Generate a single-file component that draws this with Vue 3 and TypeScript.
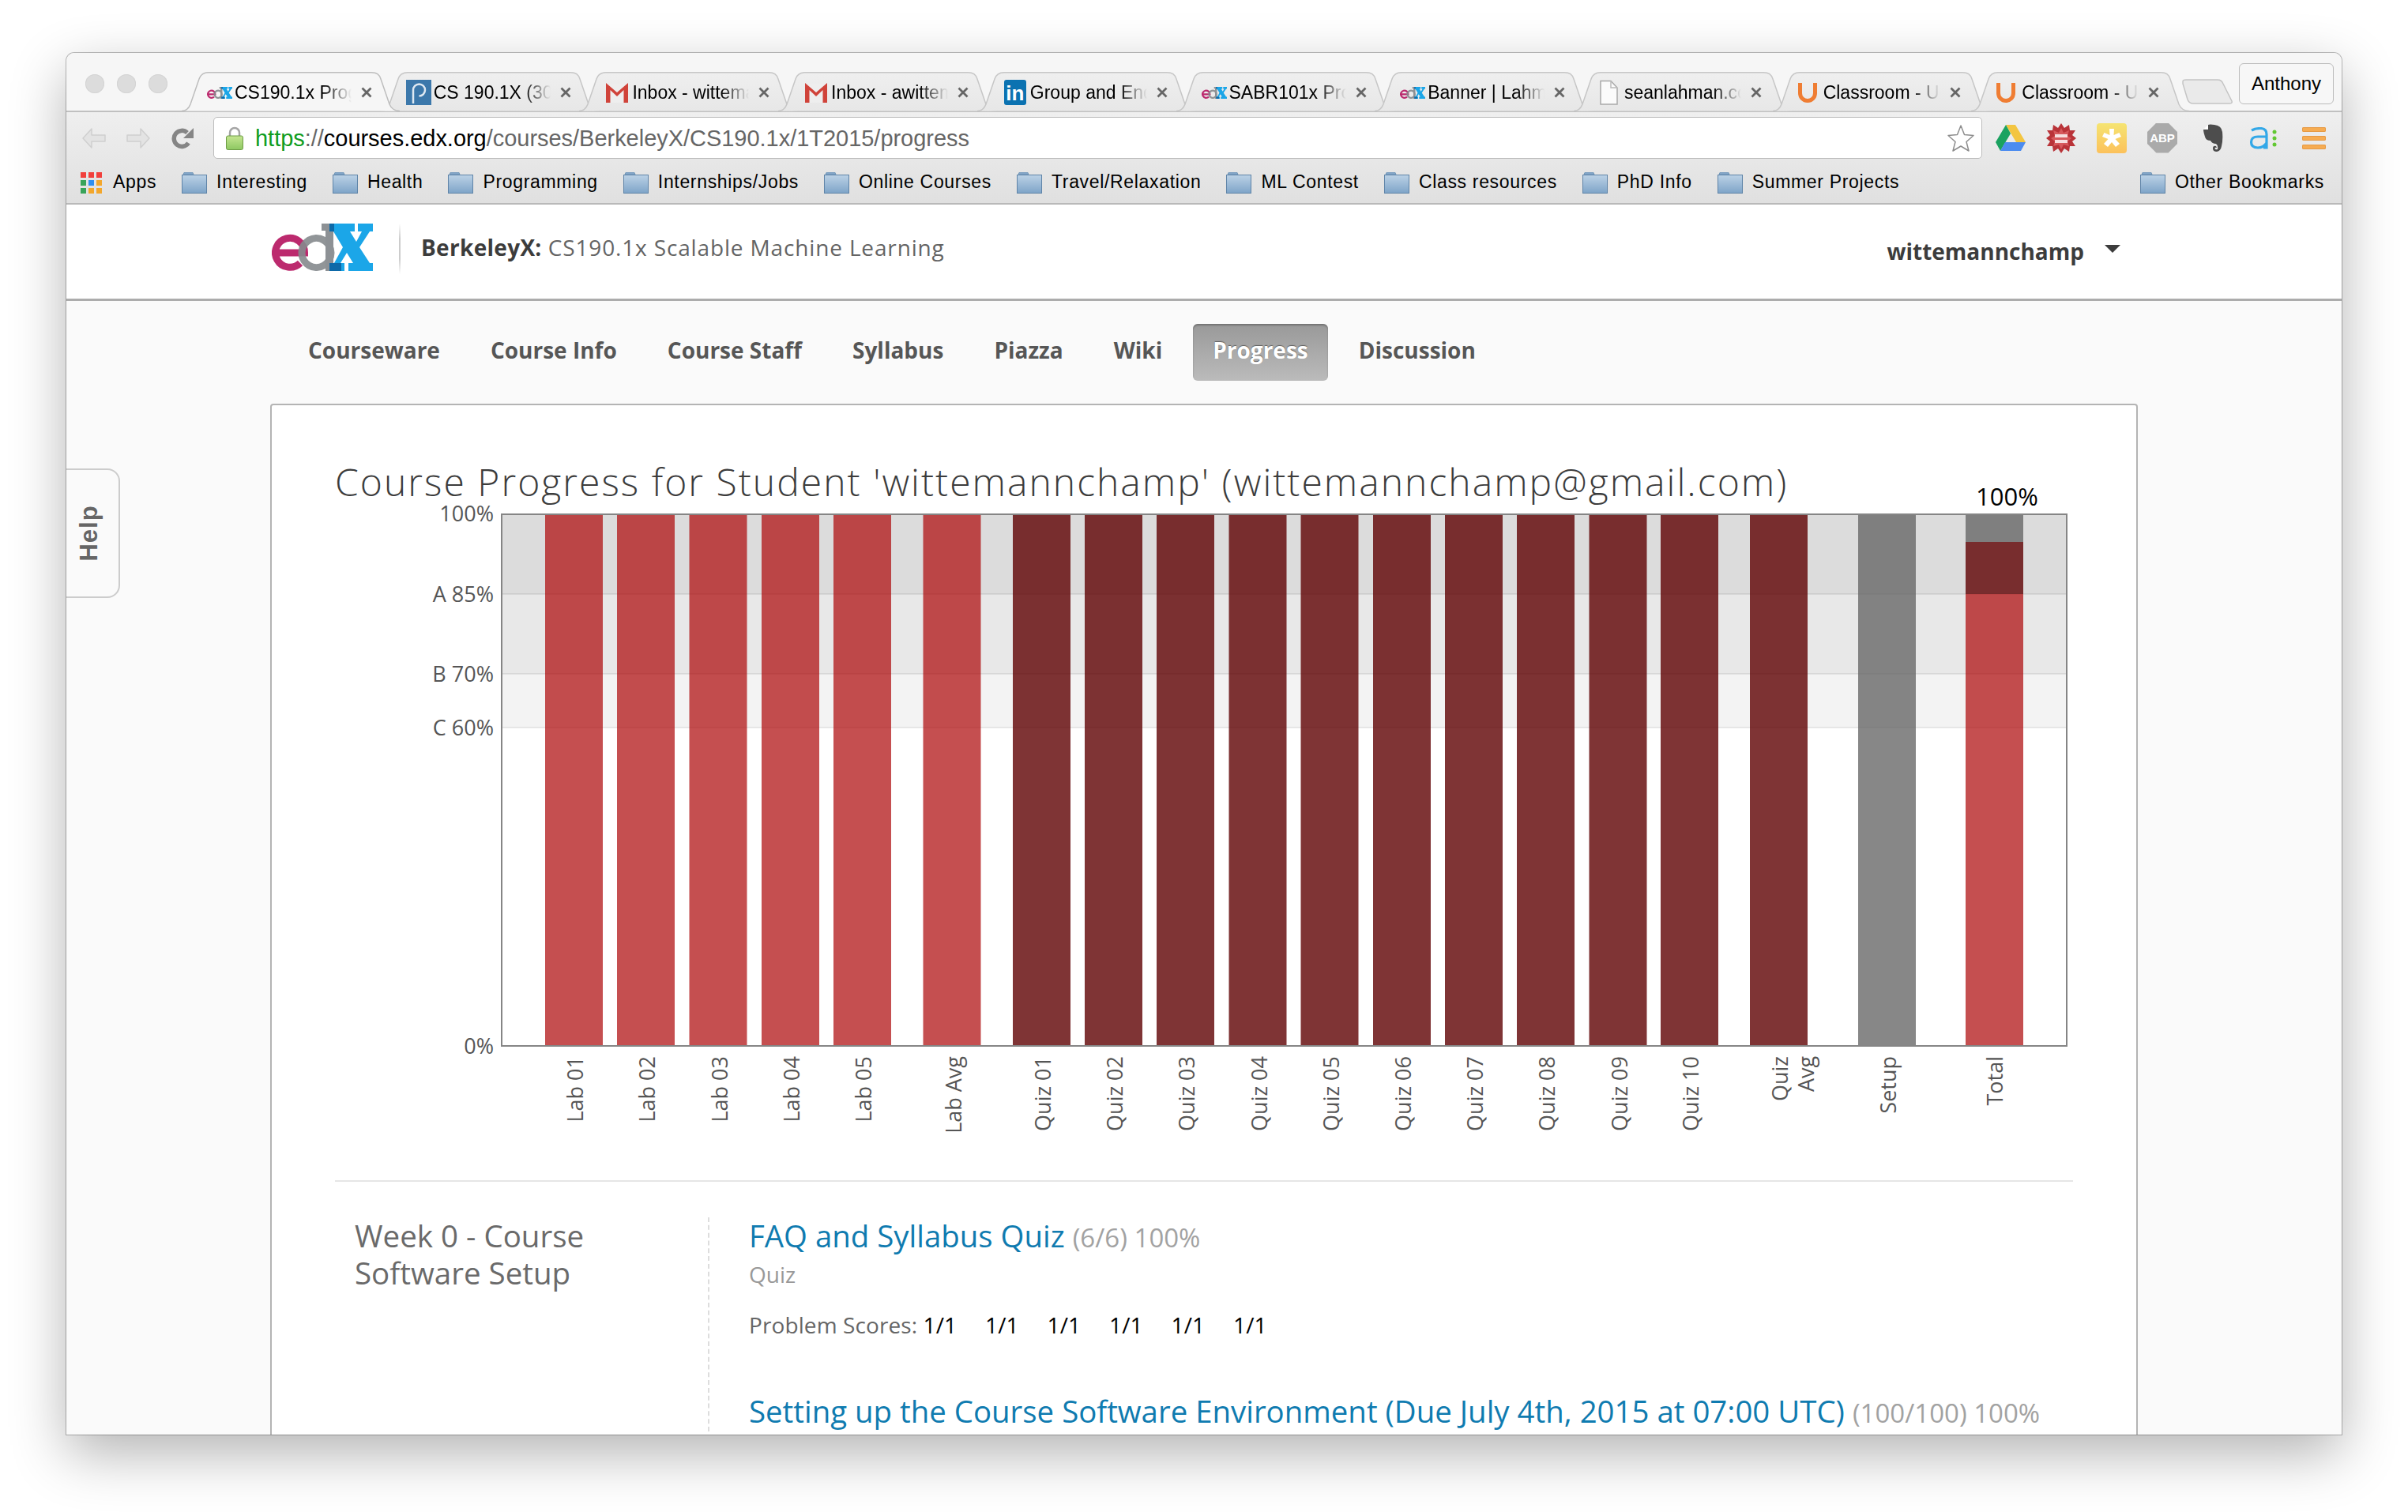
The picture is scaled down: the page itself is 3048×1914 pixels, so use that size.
<script setup lang="ts">
interface Tab { title: string; icon: string }
interface Bar { x: number; kind: 'lab' | 'quiz' | 'setup' }
interface XLabel { x: number; text: string }

const tabs: Tab[] = [
  { title: 'CS190.1x Progress', icon: 'edx' },
  { title: 'CS 190.1X (30 unread)', icon: 'piazza' },
  { title: 'Inbox - wittemannchamp', icon: 'gmail' },
  { title: 'Inbox - awittemann', icon: 'gmail' },
  { title: 'Group and Endorsements', icon: 'in' },
  { title: 'SABR101x Progress', icon: 'edx' },
  { title: 'Banner | Lahman', icon: 'edx' },
  { title: 'seanlahman.com', icon: 'doc' },
  { title: 'Classroom - Udacity', icon: 'u' },
  { title: 'Classroom - Udacity', icon: 'u' },
]
const folders: string[] = ['Interesting', 'Health', 'Programming', 'Internships/Jobs', 'Online Courses', 'Travel/Relaxation', 'ML Contest', 'Class resources', 'PhD Info', 'Summer Projects']
const navItems: string[] = ['Courseware', 'Course Info', 'Course Staff', 'Syllabus', 'Piazza', 'Wiki', 'Progress', 'Discussion']

const PLOT_LEFT = 634
const barXs: Array<[number, Bar['kind'], string]> = [
  [690, 'lab', 'Lab 01'], [781, 'lab', 'Lab 02'], [872.5, 'lab', 'Lab 03'], [964, 'lab', 'Lab 04'], [1055, 'lab', 'Lab 05'],
  [1168.5, 'lab', 'Lab Avg'],
  [1282, 'quiz', 'Quiz 01'], [1373, 'quiz', 'Quiz 02'], [1464, 'quiz', 'Quiz 03'], [1555.5, 'quiz', 'Quiz 04'], [1646.5, 'quiz', 'Quiz 05'],
  [1738, 'quiz', 'Quiz 06'], [1829, 'quiz', 'Quiz 07'], [1920, 'quiz', 'Quiz 08'], [2011.5, 'quiz', 'Quiz 09'], [2102, 'quiz', 'Quiz 10'],
  [2215, 'quiz', 'Quiz Avg'], [2352, 'setup', 'Setup'],
]
const bars: Bar[] = barXs.map(([x, kind]) => ({ x: x - PLOT_LEFT, kind }))
const xLabels: XLabel[] = [
  ...barXs.filter(b => b[2] !== 'Quiz Avg').map(([x, , text]) => ({ x: x - PLOT_LEFT + 37, text })),
  { x: 2269 - PLOT_LEFT, text: 'Quiz\nAvg' },
  { x: 2524 - PLOT_LEFT, text: 'Total' },
]
const yTicks: Array<{ y: number; text: string }> = [
  { y: 0, text: '100%' }, { y: 102, text: 'A 85%' }, { y: 203, text: 'B 70%' }, { y: 271, text: 'C 60%' }, { y: 674, text: '0%' },
]
const scores: string[] = ['1/1', '1/1', '1/1', '1/1', '1/1', '1/1']
</script>

<template>
  <div class="stage">
    <svg class="defs" width="0" height="0" aria-hidden="true">
      <symbol id="edx-logo" viewBox="0 0 128 60">
        <path d="M4.5 37H41.5A18.5 18.5 0 1 0 36 50" fill="none" stroke="#b81f66" stroke-width="9" opacity=".95" />
        <path d="M75 37A18.5 18.5 0 1 0 75 37.01" fill="none" stroke="#85898d" stroke-width="9" opacity=".9" />
        <path d="M63 0H78V60H68V9H63Z" fill="#8d9195" />
        <path d="M74 0H105V10H99L107 23L114 10H109V0H128V10H124L111 30L124 50H128V60H97V50H103L95 37L87 50H92V60H74V50H79L90 30L78 10H74Z" fill="#1ba6e8" />
        <path d="M73 0H79V10H73ZM73 50H88V60H73Z" fill="#0d69a8" />
      </symbol>
      <symbol id="folder" viewBox="0 0 32 27">
        <path d="M2 3Q2 0 5 0H12Q15 0 15 3H2Z" fill="#83a6c8" stroke="#6f93b5" stroke-width=".8" />
        <rect x=".5" y="3.5" width="31" height="23" fill="url(#folder-g)" stroke="#5f84a8" />
      </symbol>
      <linearGradient id="folder-g" x1="0" y1="0" x2="0" y2="1">
        <stop offset="0" stop-color="#bcd2e6" /><stop offset="1" stop-color="#7ea4c8" />
      </linearGradient>
      <linearGradient id="tab-g" x1="0" y1="0" x2="0" y2="1">
        <stop offset="0" stop-color="#efefef" /><stop offset="1" stop-color="#e7e7e7" />
      </linearGradient>
      <linearGradient id="lp-g" x1="0" y1="0" x2="0" y2="1">
        <stop offset="0" stop-color="#f5e472" /><stop offset="1" stop-color="#fcc15b" />
      </linearGradient>
      <linearGradient id="lock-g" x1="0" y1="0" x2="0" y2="1">
        <stop offset="0" stop-color="#c5e691" /><stop offset="1" stop-color="#8dc761" />
      </linearGradient>
    </svg>

    <div class="window">
      <div class="strip">
        <div class="lights"><i></i><i></i><i></i></div>
        <div class="tabs">
          <div v-for="(t, i) in tabs" :key="i" class="tab" :class="{ active: i === 0 }">
            <svg class="tab-shape" viewBox="0 0 276 50" preserveAspectRatio="none">
              <path d="M0 49.5C6 49.5 9 46 11 41L22 9C24 3 28 .8 34 .8H240C247 .8 250 3 252 9L263 41C265 46 270 49.5 276 49.5" />
            </svg>
            <span class="fav" :class="{ narrow: t.icon === 'doc' || t.icon === 'u' }">
              <svg v-if="t.icon === 'edx'" class="fav-edx"><use href="#edx-logo" /></svg>
              <svg v-else-if="t.icon === 'piazza'" viewBox="0 0 32 32" width="32" height="32">
                <rect width="32" height="32" fill="#3c78ab" />
                <path d="M9 30V13A7.5 7.5 0 1 1 16.5 20.5" fill="none" stroke="#dfe9f2" stroke-width="2.5" />
              </svg>
              <svg v-else-if="t.icon === 'gmail'" viewBox="0 0 32 32" width="32" height="32">
                <path d="M2 5H30V29H2Z" fill="#eee" />
                <path d="M2 29V4L16 16L30 4V29H24.500V13L16 21L7.500 13V29Z" fill="#d0433a" />
              </svg>
              <span v-else-if="t.icon === 'in'" class="fav-in">in</span>
              <svg v-else-if="t.icon === 'doc'" viewBox="0 0 29 32" width="29" height="32">
                <path d="M2 1.500H15L23 10V31H2Z" fill="#fbfbfb" stroke="#a9a9a9" stroke-width="1.500" />
                <path d="M15 1.500V10H23" fill="none" stroke="#bbb" stroke-width="1.500" />
              </svg>
              <svg v-else viewBox="0 0 29 32" width="29" height="32">
                <path d="M2.500 4V17A9.500 9.500 0 0 0 21.500 17V4" fill="none" stroke="#ef7d33" stroke-width="5" />
              </svg>
            </span>
            <span class="tab-title">{{ t.title }}</span>
            <svg class="close" viewBox="0 0 14 14" width="14" height="14">
              <path d="M1.500 1.500L12.500 12.500M12.500 1.500L1.500 12.500" stroke="#666" stroke-width="2.800" />
            </svg>
          </div>
        </div>
        <div class="newtab">
          <svg viewBox="0 0 66 32" width="66" height="32">
            <path d="M2 3Q2 1 6 1H46Q51 1 53 6L64 28Q65 31 61 31H15Q10 31 8 26L2 6Z" fill="#eaeaea" stroke="#c4c4c4" stroke-width="1.500" />
          </svg>
        </div>
        <div class="user-chip">Anthony</div>
      </div>

      <div class="chrome">
        <div class="toolbar">
          <svg class="nav-ico" viewBox="0 0 32 28" width="32" height="28">
            <path d="M13 2L2 14L13 26V18H30V10H13Z" fill="#e3e3e3" stroke="#cfcfcf" stroke-width="1.500" stroke-linejoin="round" />
          </svg>
          <svg class="nav-ico fwd" viewBox="0 0 32 28" width="32" height="28">
            <path d="M19 2L30 14L19 26V18H2V10H19Z" fill="#e3e3e3" stroke="#cfcfcf" stroke-width="1.500" stroke-linejoin="round" />
          </svg>
          <svg class="nav-ico reload" viewBox="0 0 28 28" width="28" height="28">
            <path d="M21.500 20A10 10 0 1 1 20 7" fill="none" stroke="#858585" stroke-width="5.500" />
            <path d="M28 1V14H15Z" fill="#858585" />
          </svg>
          <div class="omnibox">
            <svg class="lock" viewBox="0 0 22 30" width="22" height="30">
              <path d="M5 13V8A6 6 0 0 1 17 8V13" fill="none" stroke="#a5a5a5" stroke-width="2.500" />
              <rect x=".5" y="12" width="21" height="17.500" rx="2" fill="url(#lock-g)" stroke="#6d9c45" />
            </svg>
            <span class="url"><span class="u-green">https</span><span class="u-grey">://</span><span class="u-dark">courses.edx.org</span><span class="u-grey">/courses/BerkeleyX/CS190.1x/1T2015/progress</span></span>
            <svg class="star" viewBox="0 0 36 36" width="36" height="36">
              <path d="M18 2L22.500 13.500L34 14.500L25 22.500L28 34L18 28L8 34L11 22.500L2 14.500L13.500 13.500Z" fill="#fff" stroke="#8d8d8d" stroke-width="1.500" stroke-linejoin="round" />
            </svg>
          </div>
          <div class="ext-icons">
            <svg viewBox="0 0 38 34" width="38" height="34">
              <path d="M13 0H25L38 22H26Z" fill="#f3c541" /><path d="M13 0L19 11L6 33L0 22Z" fill="#1aa260" /><path d="M12 22H38L32 33H6Z" fill="#4c8cf0" />
            </svg>
            <svg viewBox="0 0 38 38" width="38" height="38">
              <path d="M19 0L23 6L29 2L30 9L37 9L33 15L38 19L33 23L37 29L30 29L29 36L23 32L19 38L15 32L9 36L8 29L1 29L5 23L0 19L5 15L1 9L8 9L9 2L15 6Z" fill="#b93338" />
              <path d="M19 6L22 12L29 9L27 16L32 19L27 23L29 29L22 27L19 33L16 27L9 29L11 23L6 19L11 16L9 9L16 12Z" fill="#d6595c" />
              <path d="M11 14H27V18H11ZM11 21H27V25H11Z" fill="#f6dede" />
            </svg>
            <svg viewBox="0 0 38 38" width="38" height="38">
              <rect width="38" height="38" rx="4" fill="url(#lp-g)" />
              <path d="M16 7H22L21.500 15L28.500 12L31 17L23.500 20L29 26L24 30L19 24L14 30L9 26L14.500 20L7 17L9.500 12L16.500 15Z" fill="#fff" />
            </svg>
            <span class="abp">ABP</span>
            <svg viewBox="0 0 26 36" width="26" height="36">
              <path d="M7 1Q9 0 15 1Q24 2 25 10Q26 20 24 28Q23 34 18 35Q13 35 13 31Q13 27 17 28L18 30Q16 29 15.500 31Q16 33 19 32Q20 27 17 25Q12 25 10 21Q4 21 3 16Q1 10 1 7L7 7Z" fill="#4d4d4d" />
              <path d="M2 6L7 1V6Z" fill="#fff" />
            </svg>
            <svg viewBox="0 0 36 28" width="36" height="28">
              <path d="M3 4Q8 1.500 14 1.500Q22 1.500 22 9V26H18M22 12H11Q2.500 12 2.500 19Q2.500 26 11 26Q18 26 22 20" fill="none" stroke="#33a8e8" stroke-width="3.200" />
              <circle cx="32" cy="6" r="2.500" fill="#62c832" /><circle cx="32" cy="14" r="2.500" fill="#62c832" /><circle cx="32" cy="22" r="2.500" fill="#62c832" />
            </svg>
            <span class="menu-ico"><i></i><i></i><i></i></span>
          </div>
        </div>
        <div class="bookmarks">
          <span class="bm">
            <span class="apps"><i class="r"></i><i class="r"></i><i class="r"></i><i class="g"></i><i class="b"></i><i class="o"></i><i class="g"></i><i class="o"></i><i class="o"></i></span>
            Apps
          </span>
          <span v-for="f in folders" :key="f" class="bm">
            <svg class="folder" width="32" height="27"><use href="#folder" /></svg><span class="bm-text">{{ f }}</span>
          </span>
          <span class="bm other">
            <svg class="folder" width="32" height="27"><use href="#folder" /></svg><span class="bm-text">Other Bookmarks</span>
          </span>
        </div>
      </div>

      <header class="site-head">
        <svg class="logo" width="128" height="60"><use href="#edx-logo" /></svg>
        <span class="sep"></span>
        <h1 class="course"><strong>BerkeleyX:</strong> CS190.1x Scalable Machine Learning</h1>
        <span class="username">wittemannchamp</span>
        <span class="caret"></span>
      </header>

      <main class="main">
        <div class="help"><span>Help</span></div>
        <nav class="course-nav">
          <a v-for="n in navItems" :key="n" :class="{ current: n === 'Progress' }">{{ n }}</a>
        </nav>
        <section class="card">
          <h2 class="page-title">Course Progress for Student 'wittemannchamp' (wittemannchamp@gmail.com)</h2>
          <div class="chart">
            <span v-for="t in yTicks" :key="t.text" class="ytick" :style="{ top: t.y + 'px' }">{{ t.text }}</span>
            <svg class="plot" viewBox="0 0 1983 675" width="1983" height="675">
              <rect width="1983" height="102" fill="#dcdcdc" />
              <rect y="102" width="1983" height="101" fill="#e8e8e8" />
              <rect y="203" width="1983" height="68" fill="#f3f3f3" />
              <rect y="271" width="1983" height="404" fill="#fff" />
              <path d="M0 102H1983M0 203H1983M0 271H1983" stroke="#000" stroke-opacity=".07" stroke-width="2" />
              <rect v-for="(b, i) in bars" :key="i" :x="b.x" y="0" width="73" height="675" :class="b.kind" />
              <rect x="1854" y="0" width="73" height="36" class="setup" />
              <rect x="1854" y="36" width="73" height="66" class="quiz" />
              <rect x="1854" y="102" width="73" height="573" class="lab" />
              <rect x="1" y="1" width="1981" height="673" fill="none" stroke="#858585" stroke-width="2" />
            </svg>
            <span class="total-label">100%</span>
            <span v-for="l in xLabels" :key="l.text" class="xlabel" :style="{ left: l.x + 210 + 'px' }">{{ l.text }}</span>
          </div>
          <div class="divider"></div>
          <div class="chapter">
            <h3 class="week">Week 0 - Course Software Setup</h3>
            <div class="sections">
              <div class="sec-title"><a>FAQ and Syllabus Quiz</a> <span class="sec-score">(6/6) 100%</span></div>
              <div class="sec-type">Quiz</div>
              <div class="scores">Problem Scores: <span v-for="(s, i) in scores" :key="i" class="score">{{ s }}</span></div>
              <div class="sec-title second"><a>Setting up the Course Software Environment (Due July 4th, 2015 at 07:00 UTC)</a> <span class="sec-score">(100/100) 100%</span></div>
            </div>
          </div>
        </section>
      </main>
    </div>
  </div>
</template>

<style>
html, body { margin: 0; background: #fff; }
</style>

<style scoped>
.stage { width: 3048px; height: 1914px; overflow: hidden; padding-top: 67px; box-sizing: border-box; font-family: "Liberation Sans", Arial, sans-serif; background: #fff; }
.defs { position: absolute; }
.window { position: relative; margin-left: 84px; width: 2880px; height: 1749px; display: flex; flex-direction: column; overflow: hidden; border-radius: 10px 10px 0 0; box-shadow: 0 24px 70px rgba(0,0,0,.3), 0 0 0 1px #bdbdbd; }

.strip { position: relative; height: 73px; flex: none; display: flex; align-items: flex-end; background: #f6f6f6; border-bottom: 2px solid #c0c0c0; box-sizing: content-box; }
.lights { align-self: flex-start; display: flex; gap: 16px; margin: 27px 18px 0 24px; }
.lights i { width: 24px; height: 24px; border-radius: 50%; background: #dcdcdc; box-shadow: inset 0 0 0 1px #d4d4d4; }
.tabs { display: flex; height: 50px; margin-bottom: -1px; }
.tab { position: relative; flex: none; width: 276px; height: 50px; margin-right: -24.300px; display: flex; align-items: center; padding: 2px 0 0 32px; box-sizing: border-box; font-size: 23px; color: #000; }
.tab.active { z-index: 2; }
.tab-shape { position: absolute; inset: 0; width: 100%; height: 100%; }
.tab-shape path { fill: url(#tab-g); stroke: #c6c6c6; stroke-width: 1.500; }
.tab.active .tab-shape path { fill: #f6f6f6; stroke: #bdbdbd; }
.fav { position: relative; flex: none; width: 32px; height: 32px; display: flex; align-items: center; justify-content: center; }
.fav.narrow { width: 29px; margin-right: 3px; }
.fav.narrow + .tab-title { margin-left: 0; }
.fav-edx { width: 32px; height: 15px; }
.fav-in { width: 28px; height: 32px; background: #0b72b1; color: #fff; border-radius: 3px; font: bold 26px/34px "Liberation Sans", sans-serif; text-align: center; }
.tab-title { position: relative; flex: none; width: 148px; margin-left: 3px; overflow: hidden; white-space: nowrap; -webkit-mask-image: linear-gradient(to right, #000 76%, transparent 100%); mask-image: linear-gradient(to right, #000 76%, transparent 100%); }
.close { position: relative; flex: none; margin-left: 12px; }
.newtab { margin: 0 0 8px 14px; height: 32px; flex: none; position: relative; z-index: 1; }
.user-chip { align-self: flex-start; margin: 13px 0 0 7px; width: 120px; height: 52px; box-sizing: border-box; background: #f7f7f7; border: 1.500px solid #bcbcbc; border-radius: 6px; font-size: 24px; line-height: 49px; text-align: center; flex: none; position: relative; z-index: 1; }

.chrome { flex: none; height: 115px; background: linear-gradient(#efefef, #e0e0e0); border-bottom: 2px solid #b9b9b9; }
.toolbar { display: flex; align-items: center; height: 65px; }
.nav-ico { flex: none; margin-left: 19px; }
.nav-ico.fwd { margin-left: 24px; }
.nav-ico.reload { margin-left: 26px; }
.omnibox { flex: none; display: flex; align-items: center; margin-left: 25px; width: 2239px; height: 53px; box-sizing: border-box; background: #fff; border: 1.500px solid #bcbcbc; border-radius: 5px; }
.lock { flex: none; margin-left: 15px; }
.url { flex: 1; margin-left: 15px; padding-top: 1px; font-size: 29px; white-space: nowrap; letter-spacing: -.03px; }
.u-green { color: #0f9d1e; }
.u-grey { color: #666; }
.u-dark { color: #000; }
.star { flex: none; margin-right: 8px; }
.ext-icons { flex: none; display: grid; grid-template-columns: repeat(7, 64px); justify-items: center; align-items: center; margin-left: 4px; }
.abp { width: 38px; height: 38px; background: #aaa; color: #fff; font: bold 15px/38px "Liberation Sans", sans-serif; text-align: center; clip-path: polygon(30% 0, 70% 0, 100% 30%, 100% 70%, 70% 100%, 30% 100%, 0 70%, 0 30%); }
.menu-ico { display: flex; flex-direction: column; gap: 5px; }
.menu-ico i { width: 30px; height: 6px; border-radius: 2px; background: #f6ac52; box-shadow: inset 0 0 0 1px #e69a45; }
.bookmarks { display: flex; align-items: center; height: 46px; padding: 0 22px 4px 18px; gap: 32px; font-size: 23px; letter-spacing: .67px; color: #000; }
.bm { display: flex; align-items: center; gap: 12px; white-space: nowrap; }
.bm.other { margin-left: auto; }
.folder { flex: none; margin-top: 2px; }
.apps { display: grid; grid-template-columns: repeat(3, 7px); gap: 3px; margin-right: 2px; margin-top: 2px; }
.apps i { width: 7px; height: 7px; }
.apps .r { background: #f1403c; }
.apps .g { background: #38a35a; }
.apps .b { background: #2f8ff0; }
.apps .o { background: #f3a72c; }

.site-head { flex: none; height: 122px; box-sizing: border-box; background: #fff; border-bottom: 3px solid #acacac; display: flex; align-items: center; padding-left: 260px; font-family: "Open Sans", sans-serif; }
.logo { flex: none; margin-top: -11px; }
.sep { flex: none; width: 2px; height: 64px; margin: -8px 0 0 33px; background: linear-gradient(#fff, #ccc 30%, #ccc 70%, #fff); }
.course { margin: -11px 0 0 26px; font-size: 28px; font-weight: 400; color: #646464; white-space: nowrap; letter-spacing: .85px; }
.course strong { font-weight: 700; color: #3c3c3c; letter-spacing: .3px; }
.username { margin: -2px 0 0 auto; font-size: 28px; font-weight: 700; color: #3c3c3c; }
.caret { width: 0; height: 0; margin: -8px 280px 0 26px; border-style: solid; border-width: 10px 10px 0; border-color: #3c3c3c transparent transparent; }

.main { position: relative; flex: 1; min-height: 0; background: #fafafa; font-family: "Open Sans", sans-serif; padding-top: 29px; }
.help { position: absolute; left: -2px; top: 212px; width: 70px; height: 164px; box-sizing: border-box; background: #fafafa; border: 2px solid #ccc; border-radius: 0 16px 16px 0; display: flex; align-items: center; justify-content: center; padding-right: 8px; }
.help span { transform: rotate(-90deg); font: 700 31px "Liberation Sans", sans-serif; color: #666; letter-spacing: 1px; }
.course-nav { display: flex; gap: 10px; padding-left: 279px; height: 72px; align-items: center; }
.course-nav a { height: 72px; padding: 0 27px; font-size: 28px; font-weight: 700; line-height: 66px; color: #565656; white-space: nowrap; box-sizing: border-box; }
.course-nav a.current { padding: 0 25px; margin: 0 2px; color: #fff; border-radius: 6px; background: linear-gradient(#999, #bbb); box-shadow: inset 0 2px 2px rgba(0,0,0,.25); text-shadow: 0 -1px 1px rgba(0,0,0,.45); }
.card { margin: 29px 0 0 258px; width: 2364px; height: 1400px; box-sizing: border-box; padding: 64px 80px 0; background: #fff; border: 2px solid #b4b4b4; border-radius: 4px; }
.page-title { margin: 0; font-size: 48px; line-height: 66px; font-weight: 300; color: #3c3c3c; letter-spacing: 2.030px; white-space: nowrap; }
.chart { position: relative; margin-top: 7px; height: 844px; }
.plot { position: absolute; left: 210px; top: 0; display: block; }
.plot .lab { fill: rgba(172,4,6,.7); }
.plot .quiz { fill: rgba(95,1,2,.8); }
.plot .setup { fill: rgba(99,99,99,.77); }
.ytick { position: absolute; right: calc(100% - 201px); transform: translateY(-50%); font-size: 27px; line-height: 32px; color: #555; white-space: nowrap; }
.total-label { position: absolute; left: 2077px; top: -42px; font-size: 31px; line-height: 40px; color: #000; }
.xlabel { position: absolute; top: 687px; writing-mode: vertical-rl; transform: translateX(-50%) rotate(180deg); text-align: right; white-space: pre; font-size: 27px; line-height: 33px; color: #555; }
.divider { height: 2px; background: #e6e6e6; }
.chapter { display: flex; margin-top: 45px; }
.week { flex: none; width: 472px; box-sizing: border-box; margin: 0; padding: 0 90px 0 25px; font-size: 38.500px; line-height: 47px; font-weight: 400; color: #6a6a6a; }
.sections { flex: 1; border-left: 2px dashed #ddd; padding-left: 50px; white-space: nowrap; }
.sec-title { font-size: 38.400px; line-height: 46px; color: #0f7bb0; }
.sec-title.second { margin-top: 67px; }
.sec-score { font-size: 33px; color: #a2a2a2; }
.sec-type { margin-top: 4px; font-size: 28px; line-height: 38px; color: #999; }
.scores { margin-top: 26px; font-size: 28px; line-height: 38px; color: #666; letter-spacing: .1px; }
.score { display: inline-block; width: 78.500px; color: #000; }
</style>
